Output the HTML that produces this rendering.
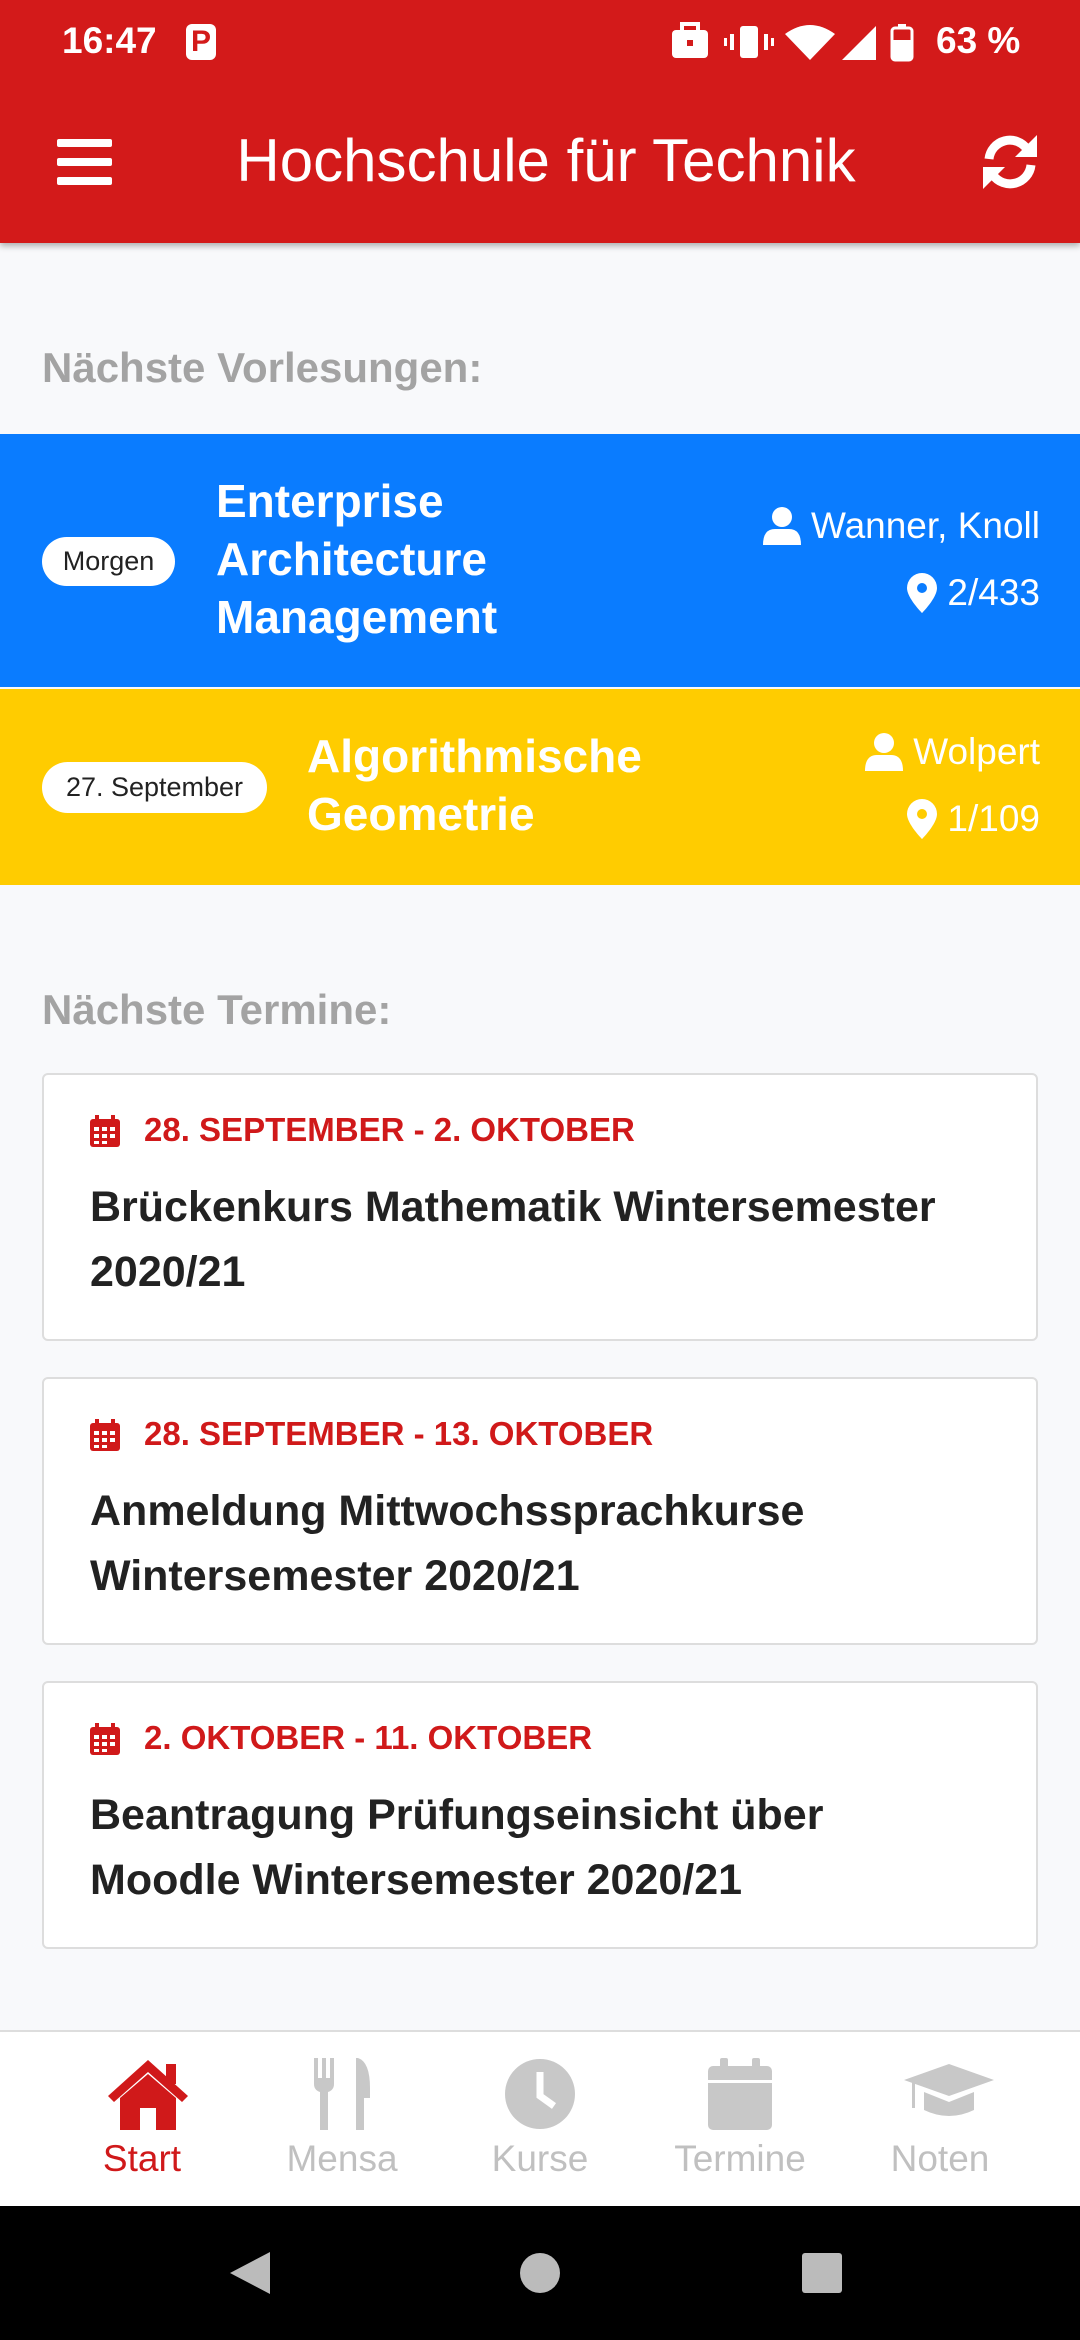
<!DOCTYPE html>
<html><head><meta charset="utf-8"><style>
*{margin:0;padding:0;box-sizing:border-box}
body{width:1080px;height:2340px;overflow:hidden;background:#f8f9fb;font-family:"Liberation Sans",Roboto,sans-serif;position:relative}
.abs{position:absolute}
.hdr{left:0;top:0;width:1080px;height:243px;background:#d31a1a;box-shadow:0 3px 6px rgba(0,0,0,.3)}
.st{color:#fff;font-size:37px;font-weight:bold}
.title{left:0;width:1080px;top:128px;text-align:center;color:#fff;font-size:60px;line-height:66px;padding-left:12px}
.sec{left:42px;color:#a3a3a3;font-size:42px;font-weight:bold}
.band{left:0;width:1080px}
.pill{background:#fff;border-radius:30px;color:#222;font-size:27px;display:flex;align-items:center;justify-content:center}
.lt{color:#fff;font-weight:bold;font-size:46px;line-height:58px}
.rt{right:40px;color:#fff;font-size:37px;display:flex;align-items:center;gap:10px}
.card{left:42px;width:996px;background:#fff;border:2px solid #ddd;border-radius:6px}
.dt{position:absolute;left:100px;top:36px;color:#d0191a;font-weight:bold;font-size:33px}
.cal{position:absolute;left:46px;top:40px}
.ct{position:absolute;left:46px;top:100px;color:#222;font-size:43px;line-height:65px;font-weight:bold;width:920px}
.nav{left:0;top:2030px;width:1080px;height:176px;background:#fff;border-top:2px solid #ddd}
.ni{position:absolute;top:0;width:216px;text-align:center}
.ni svg{position:absolute;left:72px;top:26px}
.ni span{position:absolute;left:0;width:216px;top:106px;font-size:37px;color:#c0c0c0}
.bot{left:0;top:2206px;width:1080px;height:134px;background:#000}
</style></head><body>
<div class="abs hdr"></div>
<div class="abs st" style="left:62px;top:20px">16:47</div>
<div class="abs" style="left:186px;top:24px;width:30px;height:36px;background:#fff;border-radius:6px;color:#d31a1a;font-weight:bold;font-size:30px;text-align:center;line-height:36px">P</div>
<svg class="abs" style="left:670px;top:22px" width="300" height="40" viewBox="0 0 300 40" fill="#fff">
<rect x="2" y="8" width="36" height="28" rx="4"/><rect x="12" y="2" width="16" height="8" fill="none" stroke="#fff" stroke-width="4"/><rect x="17" y="18" width="6" height="6" fill="#d31a1a"/>
<rect x="70" y="4" width="18" height="32" rx="3"/><rect x="60" y="12" width="4" height="16"/><rect x="94" y="12" width="4" height="16"/><rect x="54" y="16" width="3" height="8"/><rect x="101" y="16" width="3" height="8"/>
<path d="M115 12 Q140 -6 165 12 L140 38Z"/><path d="M172 38 L206 4 L206 38Z"/>
<rect x="222" y="6" width="20" height="32" rx="3" fill="none" stroke="#fff" stroke-width="3"/><rect x="228" y="2" width="8" height="4"/><rect x="222" y="18" width="20" height="20"/>
</svg>
<div class="abs st" style="left:936px;top:20px">63 %</div>
<svg class="abs" style="left:57px;top:139px" width="55" height="46" viewBox="0 0 55 46" fill="#fff"><rect y="0" width="55" height="8" rx="2"/><rect y="19" width="55" height="8" rx="2"/><rect y="38" width="55" height="8" rx="2"/></svg>
<div class="abs title">Hochschule für Technik</div>
<svg class="abs" style="left:979px;top:131px" width="62" height="62" viewBox="0 0 62 62" fill="none" stroke="#fff" stroke-width="9"><path d="M10 28 A21 21 0 0 1 48 18"/><path d="M52 34 A21 21 0 0 1 14 44"/><path d="M58 4 V26 H36Z" fill="#fff" stroke="none"/><path d="M4 58 V36 H26Z" fill="#fff" stroke="none"/></svg>

<div class="abs sec" style="top:344px">Nächste Vorlesungen:</div>
<div class="abs band" style="top:434px;height:253px;background:#0a7cff"></div>
<div class="abs pill" style="left:42px;top:537px;width:133px;height:49px">Morgen</div>
<div class="abs lt" style="left:216px;top:472px">Enterprise<br>Architecture<br>Management</div>
<div class="abs rt" style="top:505px"><svg width="38" height="38" viewBox="0 0 38 38" fill="#fff"><circle cx="19" cy="10" r="10"/><path d="M0 38 Q0 22 12 22 H26 Q38 22 38 38Z"/></svg>Wanner, Knoll</div>
<div class="abs rt" style="top:572px"><svg width="30" height="40" viewBox="0 0 30 40" fill="#fff"><path d="M15 0 A15 15 0 0 1 30 15 C30 25 15 40 15 40 C15 40 0 25 0 15 A15 15 0 0 1 15 0Z"/><circle cx="15" cy="15" r="5" fill="#0a7cff"/></svg>2/433</div>

<div class="abs band" style="top:689px;height:196px;background:#ffcc00"></div>
<div class="abs pill" style="left:42px;top:762px;width:225px;height:51px">27. September</div>
<div class="abs lt" style="left:307px;top:727px">Algorithmische<br>Geometrie</div>
<div class="abs rt" style="top:731px"><svg width="38" height="38" viewBox="0 0 38 38" fill="#fff"><circle cx="19" cy="10" r="10"/><path d="M0 38 Q0 22 12 22 H26 Q38 22 38 38Z"/></svg>Wolpert</div>
<div class="abs rt" style="top:798px"><svg width="30" height="40" viewBox="0 0 30 40" fill="#fff"><path d="M15 0 A15 15 0 0 1 30 15 C30 25 15 40 15 40 C15 40 0 25 0 15 A15 15 0 0 1 15 0Z"/><circle cx="15" cy="15" r="5" fill="#ffcc00"/></svg>1/109</div>

<div class="abs sec" style="top:986px">Nächste Termine:</div>

<div class="abs card" style="top:1073px;height:268px">
<svg class="cal" width="30" height="32" viewBox="0 0 30 32" fill="#d0191a"><rect x="0" y="4" width="30" height="28" rx="3"/><rect x="5" y="0" width="4" height="8"/><rect x="21" y="0" width="4" height="8"/><g fill="#fff"><rect x="4" y="12" width="5" height="4"/><rect x="12" y="12" width="5" height="4"/><rect x="20" y="12" width="5" height="4"/><rect x="4" y="19" width="5" height="4"/><rect x="12" y="19" width="5" height="4"/><rect x="20" y="19" width="5" height="4"/><rect x="4" y="26" width="5" height="3"/><rect x="12" y="26" width="5" height="3"/></g></svg>
<div class="dt">28. SEPTEMBER - 2. OKTOBER</div>
<div class="ct">Brückenkurs Mathematik Wintersemester 2020/21</div></div>

<div class="abs card" style="top:1377px;height:268px">
<svg class="cal" width="30" height="32" viewBox="0 0 30 32" fill="#d0191a"><rect x="0" y="4" width="30" height="28" rx="3"/><rect x="5" y="0" width="4" height="8"/><rect x="21" y="0" width="4" height="8"/><g fill="#fff"><rect x="4" y="12" width="5" height="4"/><rect x="12" y="12" width="5" height="4"/><rect x="20" y="12" width="5" height="4"/><rect x="4" y="19" width="5" height="4"/><rect x="12" y="19" width="5" height="4"/><rect x="20" y="19" width="5" height="4"/><rect x="4" y="26" width="5" height="3"/><rect x="12" y="26" width="5" height="3"/></g></svg>
<div class="dt">28. SEPTEMBER - 13. OKTOBER</div>
<div class="ct">Anmeldung Mittwochssprachkurse Wintersemester 2020/21</div></div>

<div class="abs card" style="top:1681px;height:268px">
<svg class="cal" width="30" height="32" viewBox="0 0 30 32" fill="#d0191a"><rect x="0" y="4" width="30" height="28" rx="3"/><rect x="5" y="0" width="4" height="8"/><rect x="21" y="0" width="4" height="8"/><g fill="#fff"><rect x="4" y="12" width="5" height="4"/><rect x="12" y="12" width="5" height="4"/><rect x="20" y="12" width="5" height="4"/><rect x="4" y="19" width="5" height="4"/><rect x="12" y="19" width="5" height="4"/><rect x="20" y="19" width="5" height="4"/><rect x="4" y="26" width="5" height="3"/><rect x="12" y="26" width="5" height="3"/></g></svg>
<div class="dt">2. OKTOBER - 11. OKTOBER</div>
<div class="ct">Beantragung Prüfungseinsicht über<br>Moodle Wintersemester 2020/21</div></div>

<div class="abs nav">
<div class="ni" style="left:34px"><svg width="84" height="72" viewBox="0 0 84 72" fill="#d0191a"><path d="M42 2 L82 38 L76 44 L42 14 L8 44 L2 38Z"/><path d="M14 40 L42 16 L70 40 V72 H50 V50 H34 V72 H14Z"/><rect x="60" y="6" width="10" height="20"/></svg><span style="color:#d0191a">Start</span></div>
<div class="ni" style="left:234px"><svg width="72" height="72" viewBox="0 0 72 72" fill="#c8c8c8"><path d="M8 0 H12 V20 H16 V0 H20 V20 H24 V0 H28 V26 Q28 32 22 34 V72 H14 V34 Q8 32 8 26Z"/><path d="M52 0 Q64 4 64 30 V40 H58 V72 H50 V0Z"/></svg><span>Mensa</span></div>
<div class="ni" style="left:432px"><svg width="72" height="72" viewBox="0 0 72 72"><circle cx="36" cy="36" r="35" fill="#c8c8c8"/><path d="M36 14 V38 L50 48" stroke="#fff" stroke-width="7" fill="none"/></svg><span>Kurse</span></div>
<div class="ni" style="left:632px"><svg width="72" height="72" viewBox="0 0 72 72" fill="#c8c8c8"><rect x="4" y="8" width="64" height="64" rx="5"/><rect x="16" y="0" width="8" height="14" rx="2"/><rect x="48" y="0" width="8" height="14" rx="2"/><rect x="4" y="22" width="64" height="3" fill="#fff"/></svg><span>Termine</span></div>
<div class="ni" style="left:832px"><svg width="90" height="72" viewBox="0 0 90 72" fill="#c8c8c8"><path d="M45 6 L90 22 L45 38 L0 22Z"/><path d="M20 34 V52 Q45 64 70 52 V34 L45 44Z"/><rect x="8" y="24" width="3" height="26"/></svg><span>Noten</span></div>
</div>
<div class="abs bot"></div>
<svg class="abs" style="left:230px;top:2250px" width="620" height="46" viewBox="0 0 620 46" fill="#bbb"><path d="M0 23 L40 2 V44Z"/><circle cx="310" cy="23" r="20"/><rect x="572" y="3" width="40" height="40" rx="3"/></svg>
</body></html>
